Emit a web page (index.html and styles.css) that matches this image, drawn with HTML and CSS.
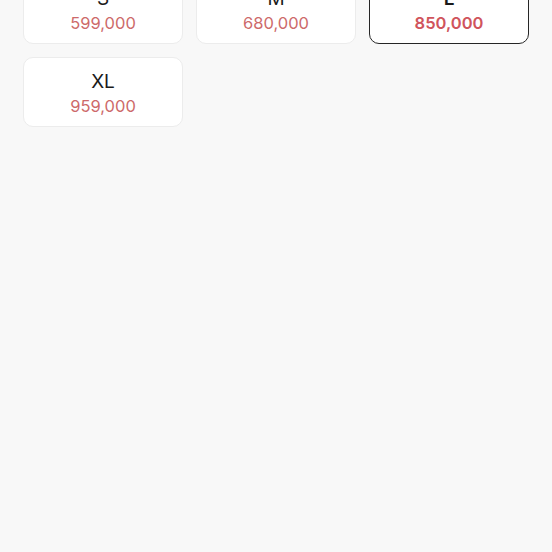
FILE: index.html
```html
<!DOCTYPE html>
<html>
<head>
<meta charset="utf-8">
<link rel="stylesheet" href="styles.css">
</head>
<body>
<div class="sizes">
  <div class="size-card"><div class="size-name">S</div><div class="size-price">599,000</div></div>
  <div class="size-card"><div class="size-name">M</div><div class="size-price">680,000</div></div>
  <div class="size-card selected"><div class="size-name">L</div><div class="size-price">850,000</div></div>
  <div class="size-card"><div class="size-name">XL</div><div class="size-price">959,000</div></div>
</div>
</body>
</html>
```
FILE: styles.css
```css
html, body {
  margin: 0;
  padding: 0;
  background: #f8f8f8;
  font-family: Inter, "Liberation Sans", Arial, sans-serif;
  overflow: hidden;
  height: 552px;
}
.sizes {
  display: grid;
  grid-template-columns: repeat(3, 160px);
  gap: 13px;
  padding: 0 23px;
  margin-top: -26px;
}
.size-card {
  box-sizing: border-box;
  height: 70px;
  background: #ffffff;
  border: 1px solid #ececec;
  border-radius: 10px;
  padding-top: 13px;
  display: flex;
  flex-direction: column;
  align-items: center;
  gap: 2px;
}
.size-name {
  font-size: 19px;
  line-height: 22px;
  color: #1a1a1a;
}
.size-price {
  font-size: 16.5px;
  line-height: 22px;
  color: #cd6a6a;
}
.size-card.selected {
  border: 1.5px solid #262626;
}
.size-card.selected .size-name {
  font-weight: 600;
}
.size-card.selected .size-price {
  color: #d0545c;
  font-weight: 600;
}
```
